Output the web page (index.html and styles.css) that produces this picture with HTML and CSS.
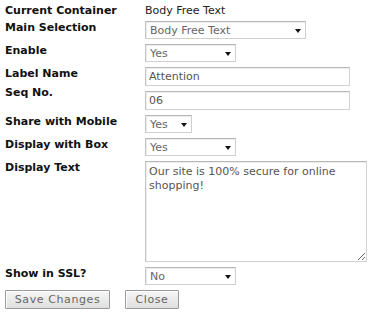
FILE: index.html
```html
<!DOCTYPE html>
<html lang="en">
<head>
  <meta charset="UTF-8">
  <title>Container Settings</title>
  <link rel="stylesheet" href="styles.css">
</head>
<body>
  <form class="settings">
    <!-- current container -->
    <div class="row first">
      <span class="label">Current Container</span>
      <span class="value">Body Free Text</span>
    </div>

    <div class="row">
      <label class="label">Main Selection</label>
      <span class="select-wrap w-main">
        <select><option>Body Free Text</option></select>
      </span>
    </div>

    <div class="row">
      <label class="label">Enable</label>
      <span class="select-wrap w-mid">
        <select><option>Yes</option></select>
      </span>
    </div>

    <div class="row">
      <label class="label">Label Name</label>
      <input type="text" class="text-input" value="Attention">
    </div>

    <div class="row">
      <label class="label lift">Seq No.</label>
      <input type="text" class="text-input" value="06">
    </div>

    <div class="row">
      <label class="label">Share with Mobile</label>
      <span class="select-wrap w-small">
        <select><option>Yes</option></select>
      </span>
    </div>

    <div class="row">
      <label class="label">Display with Box</label>
      <span class="select-wrap w-mid">
        <select><option>Yes</option></select>
      </span>
    </div>

    <div class="row">
      <label class="label">Display Text</label>
      <textarea class="text-area">Our site is 100% secure for online shopping!</textarea>
    </div>

    <div class="row">
      <label class="label">Show in SSL?</label>
      <span class="select-wrap w-mid">
        <select><option>No</option></select>
      </span>
    </div>

    <div class="buttons">
      <button type="button" class="btn btn-save">Save Changes</button>
      <button type="button" class="btn btn-close">Close</button>
    </div>
  </form>
</body>
</html>
```

FILE: styles.css
```css
body {
  margin: 0;
  background: #fff;
  font-family: Verdana, 'DejaVu Sans', sans-serif;
  font-size: 11px;
  color: #111;
}

.settings {
  padding: 4px 5px 0 5px;
}

/* one line per field */
.row {
  display: flex;
  align-items: flex-start;
  margin-bottom: 5px;
}

.row.first {
  margin-bottom: 0;
  height: 17px;
}

.label {
  width: 140px;
  flex-shrink: 0;
  font-weight: bold;
  line-height: 14px;
  color: #111;
}

/* Seq No. sits a little higher than its box */
.label.lift {
  margin-top: -5px;
}

.value {
  line-height: 14px;
  color: #222;
}

/* dropdowns */
.select-wrap {
  position: relative;
  display: block;
  height: 18px;
}

.select-wrap select {
  appearance: none;
  -webkit-appearance: none;
  width: 100%;
  height: 100%;
  margin: 0;
  padding: 0 12px 0 4px;
  border: 1px solid #cfcfcf;
  border-top-color: #b5b5b5;
  border-left-color: #c4c4c4;
  border-radius: 0;
  background: #fff;
  box-shadow: inset 1px 1px 1px #ececec;
  font-family: inherit;
  font-size: 11px;
  color: #666;
  outline: none;
}

.select-wrap::after {
  content: '';
  position: absolute;
  right: 5px;
  top: 8px;
  border-left: 3px solid transparent;
  border-right: 3px solid transparent;
  border-top: 4px solid #111;
  pointer-events: none;
}

.w-main { width: 161px; }
.w-mid { width: 91px; }
.w-small { width: 47px; }

/* text boxes */
.text-input,
.text-area {
  box-sizing: border-box;
  margin: 0;
  border: 1px solid #d2d2d2;
  border-top-color: #b8b8b8;
  border-left-color: #c6c6c6;
  border-radius: 0;
  background: #fff;
  box-shadow: inset 1px 1px 1px #ededed;
  font-family: inherit;
  font-size: 11px;
  color: #555;
  outline: none;
}

.text-input {
  width: 205px;
  height: 19px;
  padding: 0 3px;
}

.text-area {
  width: 222px;
  height: 101px;
  padding: 3px 3px;
  line-height: 14px;
  resize: both;
}

/* bottom buttons */
.buttons {
  display: flex;
  gap: 15px;
  margin-top: 2px;
}

.btn {
  box-sizing: border-box;
  height: 19px;
  margin: 0;
  padding: 0;
  border: 1px solid #9a9a9a;
  border-radius: 1px;
  background: linear-gradient(#f7f7f7, #dedede);
  box-shadow: inset 1px 1px 0 #fff;
  font-family: inherit;
  font-size: 11px;
  color: #666;
  letter-spacing: 0.6px;
}

.btn-save { width: 105px; }
.btn-close { width: 54px; }
```
